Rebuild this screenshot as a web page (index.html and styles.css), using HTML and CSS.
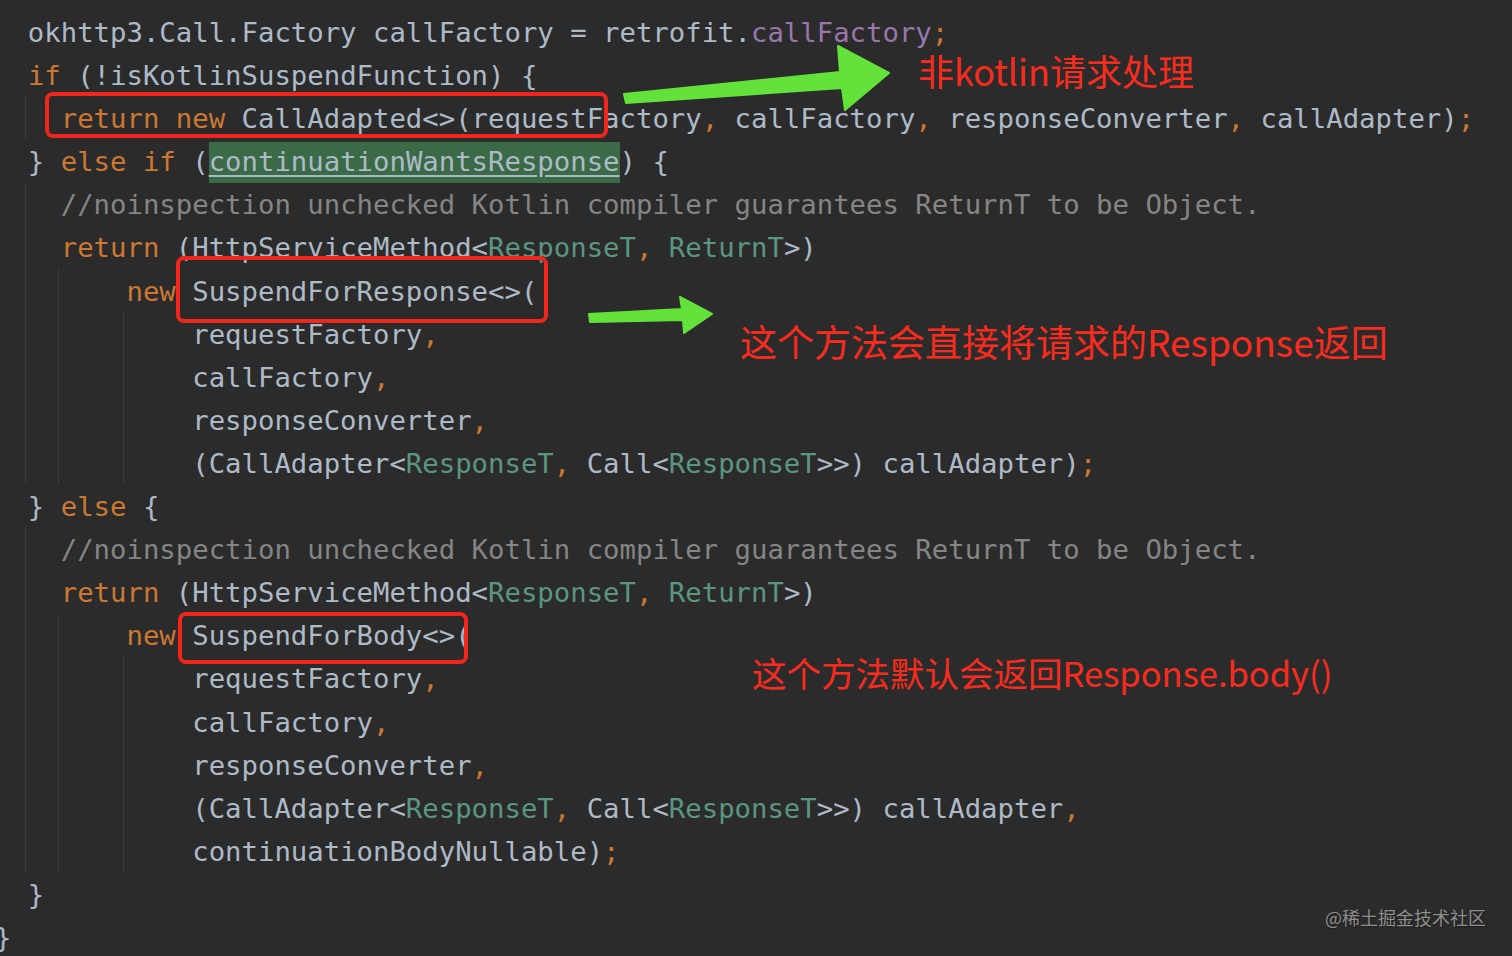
FILE: index.html
```html
<!DOCTYPE html>
<html lang="zh-CN">
<head>
    <meta charset="UTF-8" />
    <meta name="viewport" content="width=device-width, initial-scale=1" />
    <title>Retrofit HttpServiceMethod</title>
    <link rel="stylesheet" href="styles.css">
</head>
<body>
    <div class="screen">
        <pre class="code"><code>  okhttp3.Call.Factory callFactory = retrofit.<span class="field">callFactory</span><span class="kw">;</span>
  <span class="kw">if</span> (!isKotlinSuspendFunction) {
    <span class="kw">return new</span> CallAdapted&lt;&gt;(requestFactory<span class="kw">,</span> callFactory<span class="kw">,</span> responseConverter<span class="kw">,</span> callAdapter)<span class="kw">;</span>
  } <span class="kw">else if</span> (<span class="hl">continuationWantsResponse</span>) {
    <span class="comment">//noinspection unchecked Kotlin compiler guarantees ReturnT to be Object.</span>
    <span class="kw">return</span> (HttpServiceMethod&lt;<span class="tp">ResponseT</span><span class="kw">,</span> <span class="tp">ReturnT</span>&gt;)
        <span class="kw">new</span> SuspendForResponse&lt;&gt;(
            requestFactory<span class="kw">,</span>
            callFactory<span class="kw">,</span>
            responseConverter<span class="kw">,</span>
            (CallAdapter&lt;<span class="tp">ResponseT</span><span class="kw">,</span> Call&lt;<span class="tp">ResponseT</span>&gt;&gt;) callAdapter)<span class="kw">;</span>
  } <span class="kw">else</span> {
    <span class="comment">//noinspection unchecked Kotlin compiler guarantees ReturnT to be Object.</span>
    <span class="kw">return</span> (HttpServiceMethod&lt;<span class="tp">ResponseT</span><span class="kw">,</span> <span class="tp">ReturnT</span>&gt;)
        <span class="kw">new</span> SuspendForBody&lt;&gt;(
            requestFactory<span class="kw">,</span>
            callFactory<span class="kw">,</span>
            responseConverter<span class="kw">,</span>
            (CallAdapter&lt;<span class="tp">ResponseT</span><span class="kw">,</span> Call&lt;<span class="tp">ResponseT</span>&gt;&gt;) callAdapter<span class="kw">,</span>
            continuationBodyNullable)<span class="kw">;</span>
  }
}</code></pre>

        <!-- indent guides -->
        <div class="guide g1 s1"></div>
        <div class="guide g1 s2"></div>
        <div class="guide g1 s3"></div>
        <div class="guide g2 s4"></div>
        <div class="guide g2 s5"></div>
        <div class="guide g3 s6"></div>
        <div class="guide g3 s7"></div>

        <!-- annotations -->
        <div class="mark mark-1"></div>
        <div class="mark mark-2"></div>
        <div class="mark mark-3"></div>

        <svg class="arrows" width="1512" height="956" viewBox="0 0 1512 956">
            <polygon points="624,94 840,72 838,46 889,73 845,110 842,88 626,103" />
            <polygon points="589,314 682,309 680,297 712,314 684,333 683,320 590,322" />
        </svg>

        <div class="note note-1">非kotlin请求处理</div>
        <div class="note note-2">这个方法会直接将请求的Response返回</div>
        <div class="note note-3">这个方法默认会返回Response.body()</div>

        <div class="watermark">@稀土掘金技术社区</div>
    </div>
</body>
</html>
```

FILE: styles.css
```css
body {
    margin: 0;
    background-color: #2b2b2b;
    overflow: hidden;
}
.screen {
    position: relative;
    width: 1512px;
    height: 956px;
    overflow: hidden;
}
.code {
    margin: 11px 0 0 -5px;
    font-family: "DejaVu Sans Mono", "Liberation Mono", monospace;
    font-size: 27.3px;
    line-height: 43.1px;
    color: #adbac7;
    white-space: pre;
}
.kw {
    color: #cc7832;
}
.field {
    color: #9876aa;
}
.tp {
    color: #5a9681;
}
.comment {
    color: #858585;
}
.hl {
    background-color: #3a6a46;
    padding: 4px 0 6px;
    text-decoration: underline;
    text-decoration-color: #a9b7c6;
    text-underline-offset: 4px;
}
.guide {
    position: absolute;
    width: 1px;
    background-color: #3c3c3c;
}
.g1 { left: 25px; }
.g2 { left: 58px; }
.g3 { left: 123px; }
.s1 { top: 96px; height: 43px; }
.s2 { top: 182px; height: 302px; }
.s3 { top: 527px; height: 345px; }
.s4 { top: 269px; height: 215px; }
.s5 { top: 614px; height: 258px; }
.s6 { top: 312px; height: 172px; }
.s7 { top: 657px; height: 215px; }
.mark {
    position: absolute;
    border: 4px solid #f4261b;
    border-radius: 8px;
    box-sizing: border-box;
}
.mark-1 {
    left: 45px;
    top: 92px;
    width: 563px;
    height: 46px;
}
.mark-2 {
    left: 176px;
    top: 256px;
    width: 372px;
    height: 67px;
}
.mark-3 {
    left: 178px;
    top: 612px;
    width: 290px;
    height: 52px;
}
.arrows {
    position: absolute;
    left: 0;
    top: 0;
}
.arrows polygon {
    fill: #63e23b;
    stroke: #63e23b;
    stroke-width: 2;
    stroke-linejoin: round;
}
.note {
    position: absolute;
    font-family: "Noto Sans CJK SC", "Noto Sans", sans-serif;
    line-height: 1;
    color: #ff2b1e;
    white-space: nowrap;
}
.note-1 {
    left: 918px;
    top: 52px;
    font-size: 36px;
}
.note-2 {
    left: 740px;
    top: 323px;
    font-size: 37px;
}
.note-3 {
    left: 752px;
    top: 655px;
    font-size: 34.5px;
}
.watermark {
    position: absolute;
    left: 1325px;
    top: 908px;
    font-family: "Noto Sans CJK SC", sans-serif;
    font-size: 18px;
    line-height: 1;
    color: #8e8e8e;
    text-shadow: 1px 1px 1px #1e1e1e;
}
```
